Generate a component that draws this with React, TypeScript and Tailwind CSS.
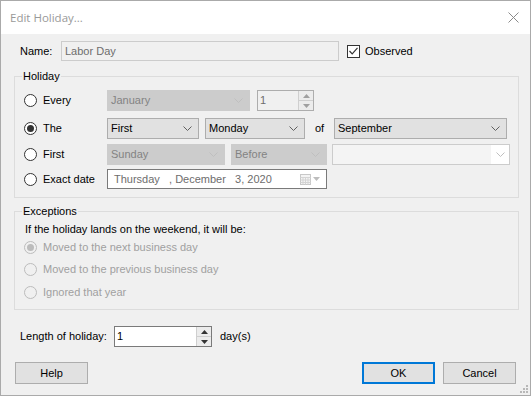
import React from "react";

const Chevron = ({ color = "#606060" }: { color?: string }) => (
  <svg width="9" height="5" viewBox="0 0 9 5" className="shrink-0">
    <path d="M0.5 0.5 L4.5 4.5 L8.5 0.5" fill="none" stroke={color} strokeWidth="1" />
  </svg>
);

const Combo = ({
  w,
  text,
  disabled,
}: {
  w: string;
  text: string;
  disabled?: boolean;
}) => (
  <div
    className={`${w} h-[21px] flex items-center justify-between pl-[3px] pr-[6px] border ${
      disabled ? "bg-[#cccccc] border-[#cccccc] text-[#838383]" : "bg-[#e1e1e1] border-[#adadad] text-black"
    }`}
  >
    <span>{text}</span>
    <Chevron color={disabled ? "#bfbfbf" : "#606060"} />
  </div>
);

const Radio = ({ checked, disabled }: { checked?: boolean; disabled?: boolean }) => (
  <div
    className={`w-[13px] h-[13px] rounded-full border flex items-center justify-center shrink-0 ${
      disabled ? "border-[#bcbcbc] bg-[#f0f0f0]" : "border-[#333333] bg-white"
    }`}
  >
    {checked && (
      <div className={`w-[7px] h-[7px] rounded-full ${disabled ? "bg-[#bcbcbc]" : "bg-[#333333]"}`} />
    )}
  </div>
);

const SpinButtons = ({ color }: { color: string }) => (
  <div className="flex flex-col w-[15px] h-full border-l border-[#cfcfcf]">
    <div className="flex-1 flex items-center justify-center border-b border-[#cfcfcf] bg-[#ececec]">
      <svg width="7" height="4" viewBox="0 0 7 4">
        <path d="M0 4 L3.5 0 L7 4 Z" fill={color} />
      </svg>
    </div>
    <div className="flex-1 flex items-center justify-center bg-[#ececec]">
      <svg width="7" height="4" viewBox="0 0 7 4">
        <path d="M0 0 L3.5 4 L7 0 Z" fill={color} />
      </svg>
    </div>
  </div>
);

export default function App() {
  return (
    <div className="w-[532px] h-[396px] bg-white [font-family:'Liberation_Sans',Arial,sans-serif] text-[11px] leading-[13px] text-black">
      <div className="relative w-[531px] h-[396px] border border-[#aaaaaa] flex flex-col bg-[#f0f0f0]">
        {/* title bar */}
        <div className="h-[33px] bg-white flex items-center justify-between pl-[9px] pr-[11px] shrink-0">
          <span className="[font-family:'Open_Sans',sans-serif] text-[11.5px] text-[#999999]">Edit Holiday...</span>
          <svg width="11" height="11" viewBox="0 0 11 11">
            <path d="M0.5 0.5 L10.5 10.5 M10.5 0.5 L0.5 10.5" stroke="#8a8a8a" strokeWidth="1" />
          </svg>
        </div>

        {/* body */}
        <div className="flex flex-col pl-[13px]">
          {/* name row */}
          <div className="mt-[7px] h-[20px] flex items-center">
            <span className="ml-[6px] w-[41px]">Name:</span>
            <div className="w-[278px] h-[20px] border border-[#cccccc] bg-[#f0f0f0] flex items-center pl-[3px] text-[#6d6d6d]">
              Labor Day
            </div>
            <div className="ml-[8px] w-[13px] h-[13px] border border-[#333333] bg-white flex items-center justify-center">
              <svg width="9" height="8" viewBox="0 0 9 8">
                <path d="M0.5 4 L3.2 6.8 L8.5 0.8" fill="none" stroke="#333333" strokeWidth="1.2" />
              </svg>
            </div>
            <span className="ml-[5px]">Observed</span>
          </div>

          {/* Holiday group */}
          <fieldset className="mt-[9px] w-[505px] border border-[#dcdcdc] pl-[7px] pt-[7px] pb-[8px]">
            <legend className="px-[1px]">Holiday</legend>
            <div className="flex flex-col">
              {/* Every */}
              <div className="h-[21px] flex items-center">
                <div className="w-[85px] flex items-center pl-[2px]">
                  <Radio />
                  <span className="ml-[6px]">Every</span>
                </div>
                <Combo w="w-[143px]" text="January" disabled />
                <div className="ml-[7px] w-[57px] h-[21px] border border-[#adadad] bg-[#f0f0f0] flex items-stretch">
                  <span className="flex-1 pl-[2px] flex items-center text-[#6d6d6d]">1</span>
                  <SpinButtons color="#a0a0a0" />
                </div>
              </div>
              {/* The */}
              <div className="mt-[7px] h-[21px] flex items-center">
                <div className="w-[85px] flex items-center pl-[2px]">
                  <Radio checked />
                  <span className="ml-[6px]">The</span>
                </div>
                <Combo w="w-[92px]" text="First" />
                <div className="ml-[6px]">
                  <Combo w="w-[100px]" text="Monday" />
                </div>
                <span className="ml-[10px] w-[19px]">of</span>
                <Combo w="w-[173px]" text="September" />
              </div>
              {/* First */}
              <div className="mt-[5px] h-[21px] flex items-center">
                <div className="w-[85px] flex items-center pl-[2px]">
                  <Radio />
                  <span className="ml-[6px]">First</span>
                </div>
                <Combo w="w-[118px]" text="Sunday" disabled />
                <div className="ml-[6px]">
                  <Combo w="w-[96px]" text="Before" disabled />
                </div>
                <div className="ml-[5px] w-[178px] h-[21px] border border-[#cccccc] bg-[#f4f4f4] flex items-stretch justify-end">
                  <div className="w-[18px] bg-white flex items-center justify-center">
                    <Chevron color="#bfbfbf" />
                  </div>
                </div>
              </div>
              {/* Exact date */}
              <div className="mt-[4px] h-[20px] flex items-center">
                <div className="w-[85px] flex items-center pl-[2px]">
                  <Radio />
                  <span className="ml-[6px]">Exact date</span>
                </div>
                <div className="w-[220px] h-[20px] border border-[#7a7a7a] bg-white flex items-center pl-[6px] pr-[6px] text-[#6d6d6d]">
                  <span className="whitespace-pre">Thursday   , December   3, 2020</span>
                  <div className="ml-auto flex items-center gap-[2px]">
                    <svg width="11" height="11" viewBox="0 0 11 11">
                      <rect x="0.5" y="0.5" width="10" height="10" fill="#f4f4f4" stroke="#c8c8c8" />
                      <path d="M0.5 3.5 H10.5 M0.5 6 H10.5 M0.5 8.5 H10.5 M3 3.5 V10.5 M5.5 3.5 V10.5 M8 3.5 V10.5" stroke="#d4d4d4" strokeWidth="1" />
                    </svg>
                    <svg width="7" height="4" viewBox="0 0 7 4">
                      <path d="M0 0 L3.5 4 L7 0 Z" fill="#bdbdbd" />
                    </svg>
                  </div>
                </div>
              </div>
            </div>
          </fieldset>

          {/* Exceptions group */}
          <fieldset className="mt-[7px] w-[505px] border border-[#dcdcdc] pl-[7px] pt-[5px] pb-[8px]">
            <legend className="px-[1px]">Exceptions</legend>
            <div className="flex flex-col">
              <span className="ml-[3px] h-[13px]">If the holiday lands on the weekend, it will be:</span>
              <div className="mt-[3px] h-[17px] flex items-center pl-[2px] text-[#a0a0a0]">
                <Radio checked disabled />
                <span className="ml-[6px]">Moved to the next business day</span>
              </div>
              <div className="mt-[5px] h-[17px] flex items-center pl-[2px] text-[#a0a0a0]">
                <Radio disabled />
                <span className="ml-[6px]">Moved to the previous business day</span>
              </div>
              <div className="mt-[6px] h-[17px] flex items-center pl-[2px] text-[#a0a0a0]">
                <Radio disabled />
                <span className="ml-[6px]">Ignored that year</span>
              </div>
            </div>
          </fieldset>

          {/* Length row */}
          <div className="mt-[16px] h-[21px] flex items-center">
            <span className="ml-[6px] w-[94px]">Length of holiday:</span>
            <div className="w-[98px] h-[21px] border border-[#7a7a7a] bg-white flex items-stretch">
              <span className="flex-1 pl-[2px] flex items-center">1</span>
              <SpinButtons color="#333333" />
            </div>
            <span className="ml-[8px]">day(s)</span>
          </div>

          {/* buttons */}
          <div className="mt-[15px] h-[22px] flex items-center">
            <button className="ml-[1px] w-[73px] h-[22px] border border-[#adadad] bg-[#e1e1e1]">Help</button>
            <button className="ml-[274px] w-[73px] h-[22px] border-2 border-[#0078d7] bg-[#e1e1e1]">OK</button>
            <button className="ml-[8px] w-[73px] h-[22px] border border-[#adadad] bg-[#e1e1e1]">Cancel</button>
          </div>
        </div>

        {/* resize grip */}
        <svg className="absolute right-[2px] bottom-[2px]" width="9" height="9" viewBox="0 0 9 9">
          <g fill="#b8b8b8">
            <rect x="7" y="1" width="2" height="2" />
            <rect x="4" y="4" width="2" height="2" />
            <rect x="7" y="4" width="2" height="2" />
            <rect x="1" y="7" width="2" height="2" />
            <rect x="4" y="7" width="2" height="2" />
            <rect x="7" y="7" width="2" height="2" />
          </g>
        </svg>
      </div>
    </div>
  );
}
